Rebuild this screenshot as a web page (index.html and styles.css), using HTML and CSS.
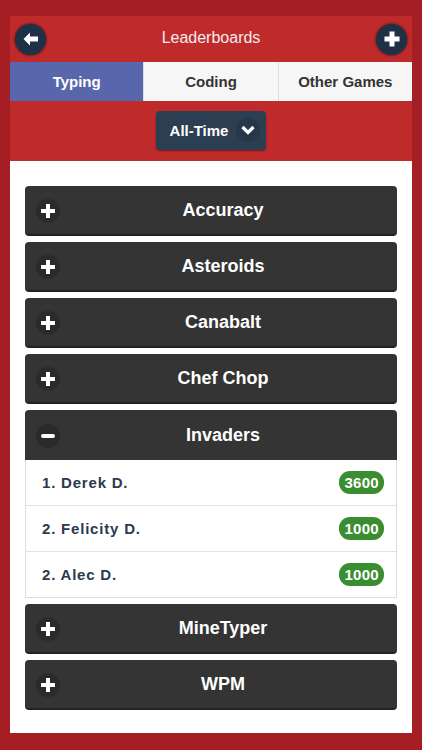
FILE: index.html
```html
<!DOCTYPE html>
<html lang="en">
<head>
    <meta charset="UTF-8">
    <meta name="viewport" content="width=device-width, initial-scale=1.0">
    <title>Leaderboards</title>
    <link rel="stylesheet" href="styles.css">
</head>
<body>
    <div class="app">
        <div class="header">
            <button class="round-btn">
                <svg width="18" height="18" viewBox="0 0 18 18"><path d="M8 2.5 L1.5 9 L8 15.5 L8 11.5 L16 11.5 L16 6.5 L8 6.5 Z" fill="#fff"/></svg>
            </button>
            <div class="title">Leaderboards</div>
            <button class="round-btn">
                <svg width="18" height="18" viewBox="0 0 18 18"><path d="M6.5 1.5 H11.5 V6.5 H16.5 V11.5 H11.5 V16.5 H6.5 V11.5 H1.5 V6.5 H6.5 Z" fill="#fff"/></svg>
            </button>
        </div>

        <div class="tabs">
            <div class="tab active">Typing</div>
            <div class="tab">Coding</div>
            <div class="tab">Other Games</div>
        </div>

        <div class="filter">
            <div class="dropdown">
                <span>All-Time</span>
                <span class="chev">
                    <svg width="14" height="10" viewBox="0 0 14 10"><path d="M1.5 2 L7 7.5 L12.5 2" stroke="#fff" stroke-width="3.2" fill="none"/></svg>
                </span>
            </div>
        </div>

        <div class="content">
            <div class="acc">
                <div class="acc-head"><span class="icon plus"></span><span class="name">Accuracy</span></div>
            </div>
            <div class="acc">
                <div class="acc-head"><span class="icon plus"></span><span class="name">Asteroids</span></div>
            </div>
            <div class="acc">
                <div class="acc-head"><span class="icon plus"></span><span class="name">Canabalt</span></div>
            </div>
            <div class="acc">
                <div class="acc-head"><span class="icon plus"></span><span class="name">Chef Chop</span></div>
            </div>
            <div class="acc open">
                <div class="acc-head"><span class="icon minus"></span><span class="name">Invaders</span></div>
                <div class="rows">
                    <div class="row"><span>1. Derek D.</span><span class="badge">3600</span></div>
                    <div class="row"><span>2. Felicity D.</span><span class="badge">1000</span></div>
                    <div class="row"><span>2. Alec D.</span><span class="badge">1000</span></div>
                </div>
            </div>
            <div class="acc">
                <div class="acc-head"><span class="icon plus"></span><span class="name">MineTyper</span></div>
            </div>
            <div class="acc">
                <div class="acc-head"><span class="icon plus"></span><span class="name">WPM</span></div>
            </div>
        </div>
    </div>
</body>
</html>
```

FILE: styles.css
```css
body {
    margin: 0;
    background: #a51e23;
    font-family: "Liberation Sans", Arial, sans-serif;
    height: 750px;
    overflow: hidden;
}
.app {
    margin: 16px 10px 0;
    background: #bf2a2b;
}
.header {
    height: 46px;
    display: flex;
    align-items: center;
    justify-content: space-between;
    padding: 0 5px;
}
.round-btn {
    width: 31px;
    height: 31px;
    border-radius: 50%;
    border: none;
    padding: 0;
    background: #1e3147;
    box-shadow: 0 0 2px 1px rgba(0,0,0,0.35);
    display: flex;
    align-items: center;
    justify-content: center;
}
.title {
    color: #f4ecec;
    font-size: 16px;
    margin-top: -3px;
}
.tabs {
    display: flex;
    height: 39px;
}
.tab {
    flex: 1;
    display: flex;
    align-items: center;
    justify-content: center;
    background: #f6f6f6;
    color: #333;
    font-weight: bold;
    font-size: 15px;
    border-left: 1px solid #dcdcdc;
}
.tab:first-child {
    border-left: none;
}
.tab.active {
    background: #5866ab;
    color: #fff;
}
.filter {
    height: 60px;
    display: flex;
    align-items: center;
    justify-content: center;
}
.dropdown {
    width: 110px;
    height: 39px;
    box-sizing: border-box;
    margin-top: -2px;
    background: #2c3e52;
    border-radius: 4px;
    box-shadow: 0 1px 2px rgba(0,0,0,0.4);
    display: flex;
    align-items: center;
    justify-content: center;
    gap: 8px;
    padding-left: 8px;
    color: #fff;
    font-weight: bold;
    font-size: 15px;
}
.chev {
    width: 24px;
    height: 24px;
    border-radius: 50%;
    background: #26374a;
    display: flex;
    align-items: center;
    justify-content: center;
}
.content {
    background: #fff;
    height: 572px;
    box-sizing: border-box;
    padding: 25px 15px 0;
}
.acc {
    margin-bottom: 6px;
}
.acc-head {
    height: 50px;
    background: #343434;
    border-radius: 4px;
    border-bottom: 2px solid #222;
    box-sizing: border-box;
    display: flex;
    align-items: center;
    padding: 1px 11px 0;
    color: #fff;
    font-weight: bold;
    font-size: 18px;
}
.name {
    flex: 1;
    text-align: center;
}
.open .acc-head {
    border-radius: 4px 4px 0 0;
    border-bottom: none;
}
.icon {
    position: relative;
    flex: none;
    width: 24px;
    height: 24px;
    border-radius: 50%;
    background: #2a2a2a;
}
.icon::before,
.icon::after {
    content: "";
    position: absolute;
    background: #fff;
}
.icon::before {
    left: 5px;
    top: 10px;
    width: 14px;
    height: 4px;
}
.plus::after {
    left: 10px;
    top: 5px;
    width: 4px;
    height: 14px;
}
.minus::before {
    border-radius: 2px;
}
.rows {
    border: 1px solid #ddd;
    border-top: none;
}
.row {
    height: 45px;
    display: flex;
    align-items: center;
    justify-content: space-between;
    padding: 0 12px 0 16px;
    border-top: 1px solid #e2e2e2;
    color: #2b3a4e;
    font-weight: bold;
    font-size: 15px;
    letter-spacing: 0.8px;
}
.row:first-child {
    border-top: none;
}
.badge {
    background: #3a8d30;
    color: #fff;
    border-radius: 11px;
    padding: 3px 5px;
    font-size: 15px;
    letter-spacing: 0.3px;
}
```
